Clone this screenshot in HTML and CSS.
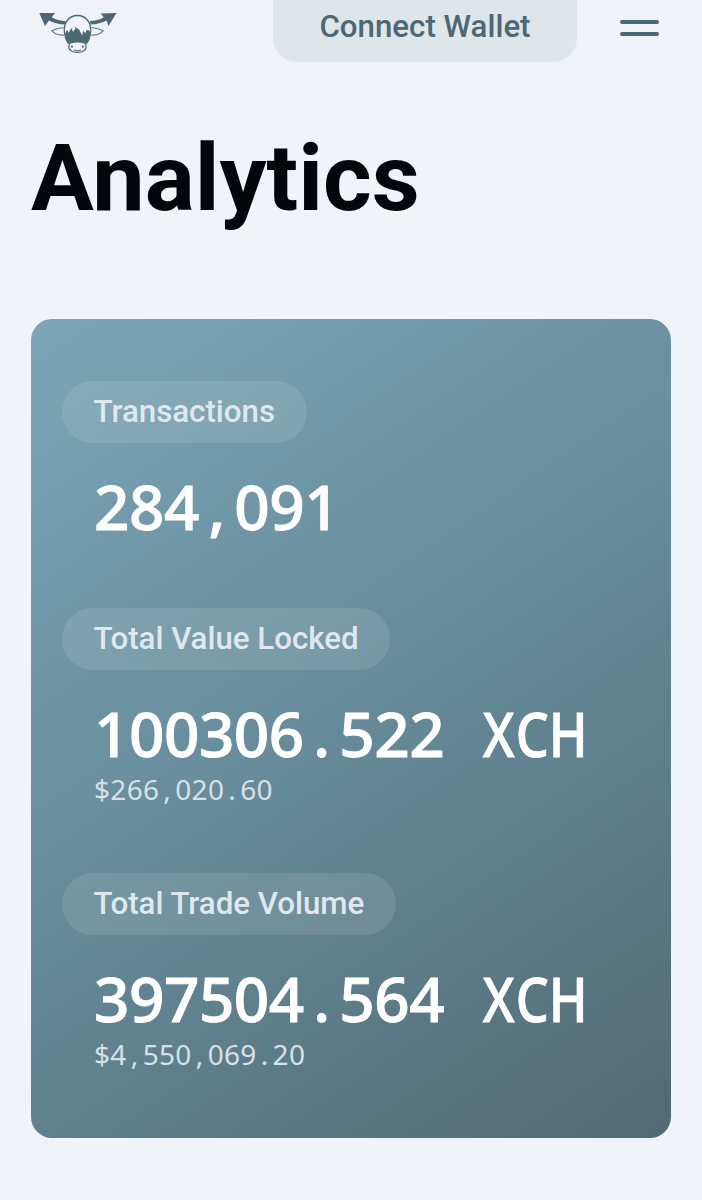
FILE: index.html
```html
<!DOCTYPE html>
<html lang="en">
<head>
<meta charset="utf-8">
<title>Analytics</title>
<link rel="stylesheet" href="styles.css">
</head>
<body>
<header class="topbar">
  <svg class="logo" viewBox="0 0 80 56" aria-label="logo">
    <path class="fill" d="M1.300 13 L17 13 L13.800 17.300 C18 20 22.500 20.800 27.500 21 L27 24.500 C21 24.300 15.500 23 11 20.500 L7 26 Z"/>
    <path class="fill" d="M78.600 13 L62.600 13.500 L65.800 17.300 C61.500 20 57 20.800 52 21 L52.500 24.500 C58.500 24.300 64 23 68.500 20.500 L70.500 26 Z"/>
    <path class="ear" d="M25.500 27.500 C21 28 17 29 13.700 30.700 C16 33.500 20.500 35.500 26 35"/>
    <path class="ear" d="M53.500 27.500 C58 28 62 29 65.300 30.700 C63 33.500 58.500 35.500 53 35"/>
    <path class="head" d="M26.500 33 C25 23 31 15.500 39.500 15.500 C48 15.500 54 23 52.500 33 C52 37 51 40 49 43 L30 43 C28 40 27 37 26.500 33 Z"/>
    <path class="fill" d="M27 34 L29.200 29.500 L30.500 33 L33.500 28 L35 32 L37.500 28.500 L39 31 L36.500 26.500 L41.500 30 L44 35.500 L45.500 30.500 L47.500 33.500 L48.500 30 L51.500 30.500 L52.300 33 C52 37 51 40 49.500 43 C47 41.500 32 41.500 29.500 43 C28 40.500 27.300 37 27 34 Z"/>
    <path class="muzzle" d="M31 45.500 C31 43 34 42 39.500 42 C45 42 48 43 48 45.500 C48.800 49.500 45.500 52.500 39.500 52.500 C33.500 52.500 30.200 49.500 31 45.500 Z"/>
    <circle class="fill" cx="34" cy="46.700" r="1.100"/>
    <circle class="fill" cx="44.800" cy="46.700" r="1.100"/>
    <path class="ear" d="M36 50 C38 51 41 51 43 50"/>
  </svg>
  <button class="wallet" type="button">Connect Wallet</button>
  <div class="burger" aria-label="menu"><span></span><span></span></div>
</header>
<main class="content">
  <h1 class="title">Analytics</h1>
  <section class="card">
    <div class="stat">
      <div class="pill">Transactions</div>
      <div class="value">284<span class="cell">,</span>091</div>
    </div>
    <div class="stat">
      <div class="pill">Total Value Locked</div>
      <div class="value">100306<span class="cell">.</span>522<span class="cell"> </span><span class="cell letter">X</span><span class="cell letter">C</span><span class="cell letter">H</span></div>
      <div class="sub">$266<span class="cell">,</span>020<span class="cell">.</span>60</div>
    </div>
    <div class="stat">
      <div class="pill">Total Trade Volume</div>
      <div class="value">397504<span class="cell">.</span>564<span class="cell"> </span><span class="cell letter">X</span><span class="cell letter">C</span><span class="cell letter">H</span></div>
      <div class="sub">$4<span class="cell">,</span>550<span class="cell">,</span>069<span class="cell">.</span>20</div>
    </div>
  </section>
</main>
</body>
</html>
```
FILE: styles.css
```css
* { box-sizing: border-box; }
html, body { margin: 0; padding: 0; }
body {
  width: 702px;
  height: 1200px;
  overflow: hidden;
  background: #f0f4f9;
  font-family: Roboto, "Liberation Sans", sans-serif;
}
.topbar {
  height: 92px;
  display: flex;
  align-items: flex-start;
  padding-left: 38px;
  padding-right: 43px;
  overflow: hidden;
  background: #eff3f8;
}
.logo { width: 80px; height: 56px; flex: none; }
.logo .fill { fill: #4d6874; }
.logo .ear { fill: none; stroke: #5f7a86; stroke-width: 1.100; }
.logo .head { fill: #f0f4f9; stroke: #4d6874; stroke-width: 1.300; }
.logo .muzzle { fill: #f0f4f9; stroke: #4d6874; stroke-width: 1.200; }
.wallet {
  width: 304px;
  height: 82px;
  margin: -20px 0 0 155px;
  padding: 10px 0 0;
  border: 0;
  border-radius: 24px;
  background: #dfe6ea;
  color: #4d6874;
  font: 500 31.250px Roboto, sans-serif;
  flex: none;
}
.burger {
  margin: 20px 0 0 auto;
  width: 39px;
  display: flex;
  flex-direction: column;
  gap: 8px;
}
.burger span { height: 4px; border-radius: 2px; background: #4d6874; }
.content { padding: 0 31px; }
.title {
  margin: 32px 0 0;
  font-size: 93.500px;
  line-height: 108px;
  font-weight: 700;
  color: #02060a;
}
.card {
  margin-top: 87px;
  height: 819px;
  padding: 62px 31px 0;
  border-radius: 21px;
  background: linear-gradient(146deg, #7ca6b7 0%, #668a99 50%, #516a74 100%);
  display: flex;
  flex-direction: column;
}
.stat { height: 227px; }
.stat + .stat + .stat { margin-top: 38px; }
.pill {
  display: inline-block;
  height: 62px;
  padding: 0 31.500px;
  border-radius: 31px;
  background: rgba(255,255,255,.1);
  color: #dfe8ee;
  font-size: 31.250px;
  font-weight: 500;
  line-height: 62px;
  vertical-align: top;
}
.value {
  margin-top: 29px;
  padding-left: 32px;
  height: 72px;
  color: #fff;
  font-family: "Noto Sans", sans-serif;
  font-size: 62px;
  line-height: 68px;
  font-weight: 500;
  letter-spacing: -.5px;
  white-space: pre;
  -webkit-text-stroke: .9px #fff;
}
.sub {
  margin-top: 2px;
  padding-left: 32px;
  color: #d6e1e7;
  font-family: "Noto Sans", sans-serif;
  font-size: 28px;
  line-height: 32px;
  letter-spacing: .3px;
}
.cell {
  display: inline-block;
  width: 1ch;
  text-align: center;
}
.letter { width: 33px; transform: scaleX(.84); }
```
